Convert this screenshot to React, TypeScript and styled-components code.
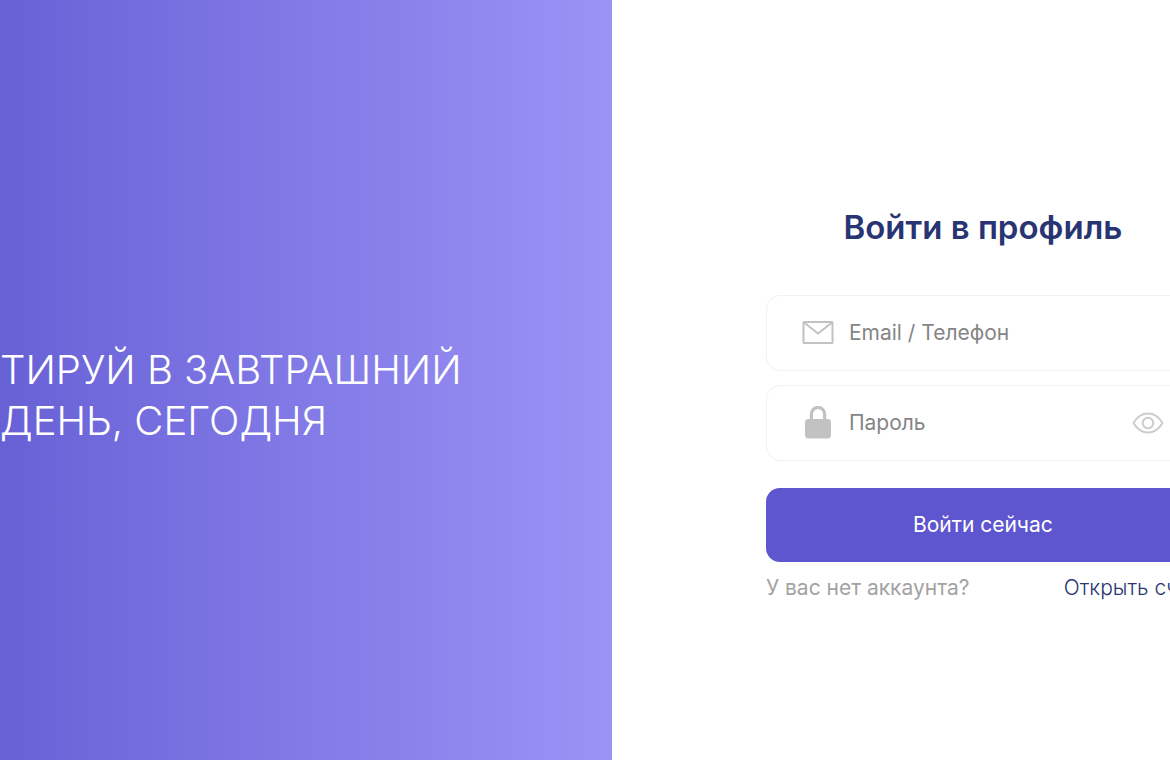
import React, { useState } from "react";
import styled, { createGlobalStyle } from "styled-components";

const GlobalStyle = createGlobalStyle`
  *, *::before, *::after { box-sizing: border-box; }
  html, body { margin: 0; background: #fff; overflow-x: hidden; }
  body, button, input { font-family: Inter, "Liberation Sans", sans-serif; font-weight: 400; }
`;

const Page = styled.div`
  display: grid;
  grid-template-columns: 52.3% minmax(0, 1fr);
  min-height: 100vh;
  overflow: hidden;
`;

const Promo = styled.section`
  display: flex;
  align-items: center;
  padding-top: 30px;
  background: linear-gradient(90deg, #6861d6 0%, #9c93f6 100%);
`;

const Slogan = styled.h1`
  margin: 0;
  color: #fff;
  font-size: 40px;
  font-weight: 300;
  line-height: 51px;
  white-space: nowrap;
`;

const SignIn = styled.main`
  display: flex;
  align-items: center;
  padding: 48px 0 0 154px;
`;

const Form = styled.form`
  display: flex;
  flex: none;
  flex-direction: column;
  width: 434px;
`;

const Title = styled.h2`
  margin: 0 0 48px;
  color: #293572;
  font-size: 33px;
  font-weight: 600;
  line-height: 40px;
  text-align: center;
`;

const Field = styled.label`
  display: flex;
  align-items: center;
  height: 76px;
  margin-bottom: 14px;
  padding: 0 35px;
  border: 1px solid #f2f2f2;
  border-radius: 14px;
  background: #fff;
`;

const FieldIcon = styled.span`
  display: flex;
  flex: none;
  justify-content: center;
  width: 32px;
  margin-right: 15px;
  color: #c2c2c2;
`;

const Input = styled.input`
  flex: 1;
  min-width: 0;
  padding: 0;
  border: 0;
  outline: 0;
  background: transparent;
  color: #293572;
  font-size: 21px;
  line-height: 28px;
  &::placeholder { color: #858585; opacity: 1; }
`;

const Reveal = styled.button`
  display: flex;
  padding: 0;
  border: 0;
  background: none;
  color: #cdcdcd;
  cursor: pointer;
`;

const Submit = styled.button`
  height: 74px;
  margin: 13px 0 12px;
  border: 0;
  border-radius: 14px;
  background: #5e56cf;
  color: #fff;
  font-size: 21px;
  cursor: pointer;
`;

const Footer = styled.div`
  display: flex;
  justify-content: space-between;
  color: #a3a3a3;
  font-size: 21px;
  line-height: 28px;
  white-space: nowrap;
`;

const SignUp = styled.a`
  color: #293572;
  font-weight: 300;
  text-decoration: none;
`;

const MailIcon = () => (
  <svg width="32" height="24" viewBox="0 0 32 24" fill="none" stroke="currentColor" strokeWidth="2" strokeLinejoin="round" aria-hidden="true">
    <rect x="1.500" y="1" width="29" height="21" rx="0.6" />
    <path d="M2 1.500 16 12.500 30 1.500" />
  </svg>
);

const LockIcon = () => (
  <svg width="28" height="34" viewBox="0 0 28 34" aria-hidden="true">
    <rect x="1" y="13" width="26" height="19.5" rx="3.5" fill="currentColor" />
    <path d="M7.4 14.500V8.200a6.6 6.800 0 0 1 13.2 0V14.500" fill="none" stroke="currentColor" strokeWidth="3.2" />
  </svg>
);

const EyeIcon = () => (
  <svg width="32" height="22" viewBox="0 0 32 22" fill="none" stroke="currentColor" strokeWidth="2" strokeLinejoin="round" aria-hidden="true">
    <path d="M1.500 11C5 5 10 1.500 16 1.500S27 5 30.500 11C27 17 22 20.500 16 20.500S5 17 1.500 11Z" />
    <circle cx="16" cy="11" r="5.300" />
  </svg>
);

export default function App() {
  const [visible, setVisible] = useState(false);
  return (
    <>
      <GlobalStyle />
      <Page>
        <Promo>
          <Slogan>
            ТИРУЙ В ЗАВТРАШНИЙ
            <br />
            ДЕНЬ, СЕГОДНЯ
          </Slogan>
        </Promo>
        <SignIn>
          <Form onSubmit={(event) => event.preventDefault()}>
            <Title>Войти в профиль</Title>
            <Field>
              <FieldIcon><MailIcon /></FieldIcon>
              <Input type="text" placeholder="Email / Телефон" aria-label="Email / Телефон" />
            </Field>
            <Field>
              <FieldIcon><LockIcon /></FieldIcon>
              <Input type={visible ? "text" : "password"} placeholder="Пароль" aria-label="Пароль" />
              <Reveal type="button" aria-pressed={visible} onClick={() => setVisible(!visible)}>
                <EyeIcon />
              </Reveal>
            </Field>
            <Submit type="submit">Войти сейчас</Submit>
            <Footer>
              <span>У вас нет аккаунта?</span>
              <SignUp href="#">Открыть счет</SignUp>
            </Footer>
          </Form>
        </SignIn>
      </Page>
    </>
  );
}
